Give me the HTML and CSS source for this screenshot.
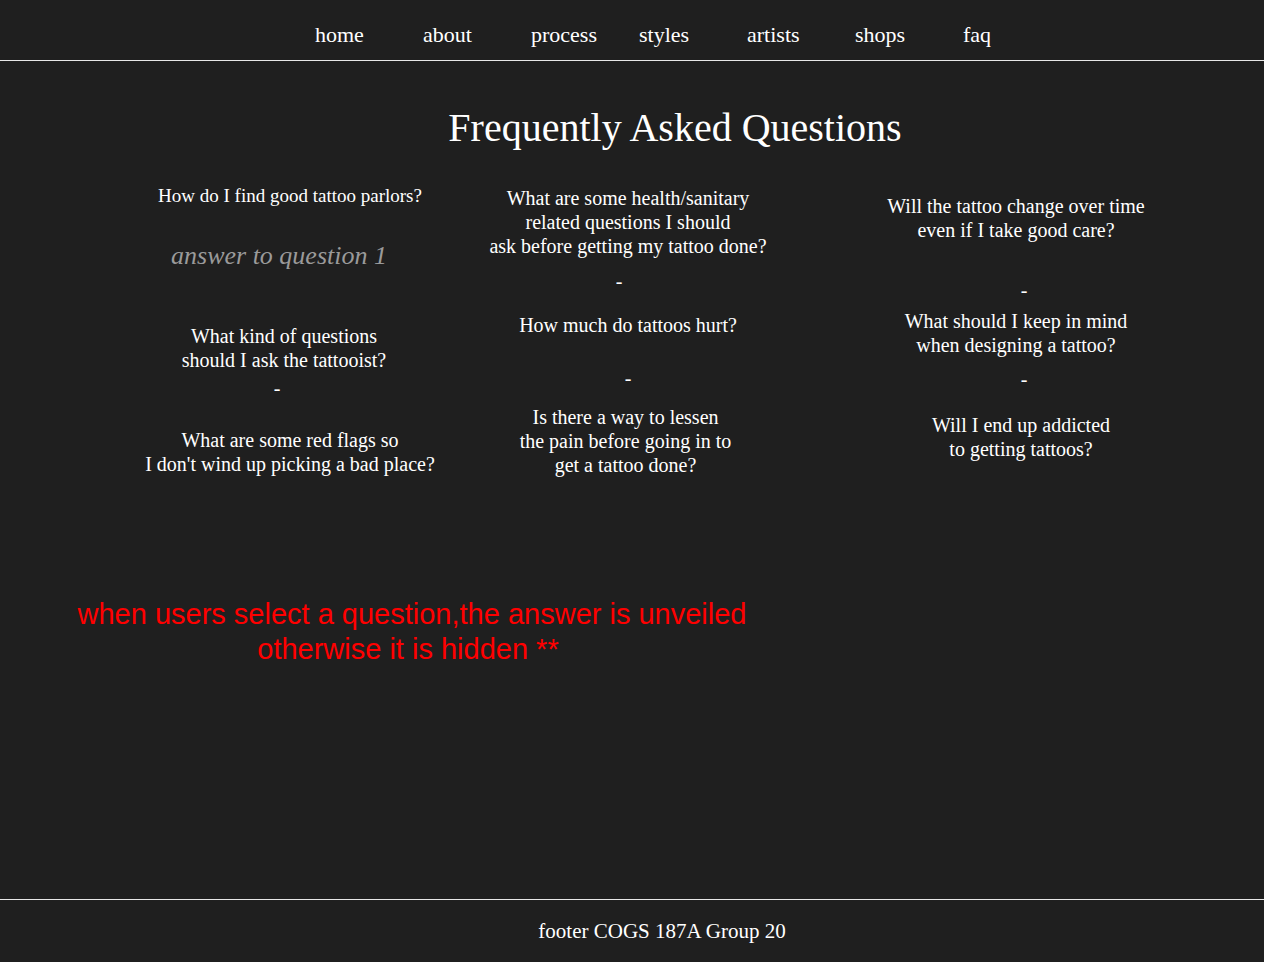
FILE: index.html
```html
<!DOCTYPE html>
<html lang="en">
<head>
<meta charset="utf-8">
<title>FAQ</title>
<link rel="stylesheet" href="styles.css">
</head>
<body>
<header class="site-header">
  <nav class="nav">
    <a class="nav-link" href="#">home</a>
    <a class="nav-link" href="#">about</a>
    <a class="nav-link" href="#">process</a>
    <a class="nav-link nav-narrow" href="#">styles</a>
    <a class="nav-link" href="#">artists</a>
    <a class="nav-link" href="#">shops</a>
    <a class="nav-link" href="#">faq</a>
  </nav>
</header>
<main class="main">
  <h1 class="title">Frequently Asked Questions</h1>
  <div class="faq-grid">
    <div class="col col1">
      <p class="q q1">How do I find good tattoo parlors?</p>
      <p class="answer">answer to question 1</p>
      <p class="q c1-q2">What kind of questions<br>should I ask the tattooist?</p>
      <p class="dash c1-d1">-</p>
      <p class="q c1-q3">What are some red flags so<br>I don't wind up picking a bad place?</p>
    </div>
    <div class="col col2">
      <p class="q">What are some health/sanitary<br>related questions I should<br>ask before getting my tattoo done?</p>
      <p class="dash c2-d1">-</p>
      <p class="q c2-q2">How much do tattoos hurt?</p>
      <p class="dash c2-d2">-</p>
      <p class="q c2-q3">Is there a way to lessen<br>the pain before going in to<br>get a tattoo done?</p>
    </div>
    <div class="col col3">
      <p class="q">Will the tattoo change over time<br>even if I take good care?</p>
      <p class="dash c3-d1">-</p>
      <p class="q c3-q2">What should I keep in mind<br>when designing a tattoo?</p>
      <p class="dash c3-d2">-</p>
      <p class="q c3-q3">Will I end up addicted<br>to getting tattoos?</p>
    </div>
  </div>
  <p class="note">when users select a question,the answer is unveiled<br>otherwise it is hidden **&nbsp;</p>
</main>
<footer class="site-footer">footer COGS 187A Group 20</footer>
</body>
</html>
```

FILE: styles.css
```css
html, body {
  margin: 0;
  padding: 0;
}
body {
  background: #1f1f1f;
  color: #ffffff;
  font-family: "Liberation Serif", "Times New Roman", serif;
  height: 962px;
  display: flex;
  flex-direction: column;
}
.site-header {
  height: 60px;
  border-bottom: 1px solid #e8e8e8;
  display: flex;
  align-items: center;
}
.nav {
  display: flex;
  padding-left: 315px;
  padding-top: 10px;
}
.nav-link {
  width: 108px;
  color: #ffffff;
  text-decoration: none;
  font-size: 22px;
  line-height: 30px;
}
.main {
  flex: 1;
  display: flex;
  flex-direction: column;
}
.title {
  margin: 43px 0 0 0;
  font-weight: normal;
  font-size: 40px;
  line-height: 48px;
  text-align: center;
  padding-left: 86px;
}
.faq-grid {
  display: grid;
  grid-template-columns: 340px 336px 440px;
  margin: 32px 0 0 120px;
}
.col {
  display: flex;
  flex-direction: column;
  align-items: center;
  text-align: center;
}
.q, .dash {
  margin: 0;
  font-size: 20px;
  line-height: 24px;
}
.q1 { font-size: 19px; }
.col2 { padding-top: 2px; }
.col3 { padding-top: 10px; }
.answer {
  margin: 33px 0 0 0;
  font-style: italic;
  font-size: 26px;
  line-height: 30px;
  color: #9a9a9a;
  padding-right: 22px;
}
.c1-q2 { margin-top: 53px; padding-right: 12px; }
.c1-d1 { margin-top: 4px; padding-right: 26px; }
.c1-q3 { margin-top: 28px; }
.c2-d1 { margin-top: 11px; padding-right: 18px; }
.c2-q2 { margin-top: 20px; }
.c2-d2 { margin-top: 29px; }
.c2-q3 { margin-top: 15px; padding-right: 5px; }
.c3-d1 { margin-top: 36px; padding-left: 16px; }
.c3-q2 { margin-top: 7px; }
.c3-d2 { margin-top: 10px; padding-left: 16px; }
.c3-q3 { margin-top: 22px; padding-left: 10px; }
.note {
  margin: 120px 0 0 0;
  width: 824px;
  text-align: center;
  color: #ff0000;
  font-family: "Liberation Sans", Arial, sans-serif;
  font-size: 29px;
  line-height: 35px;
}
.site-footer {
  height: 62px;
  border-top: 1px solid #e8e8e8;
  display: flex;
  align-items: center;
  justify-content: center;
  font-size: 21px;
  padding-left: 60px;
}
```
